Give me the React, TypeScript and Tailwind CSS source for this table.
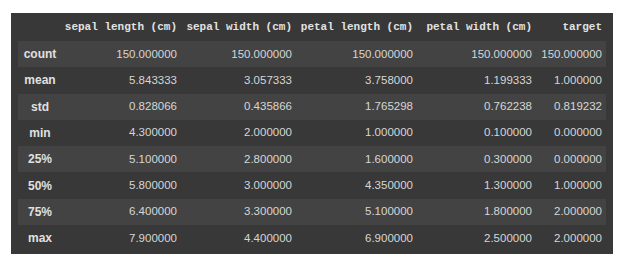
const columns = ["sepal length (cm)", "sepal width (cm)", "petal length (cm)", "petal width (cm)", "target"];

const rows: [string, string[]][] = [
  ["count", ["150.000000", "150.000000", "150.000000", "150.000000", "150.000000"]],
  ["mean", ["5.843333", "3.057333", "3.758000", "1.199333", "1.000000"]],
  ["std", ["0.828066", "0.435866", "1.765298", "0.762238", "0.819232"]],
  ["min", ["4.300000", "2.000000", "1.000000", "0.100000", "0.000000"]],
  ["25%", ["5.100000", "2.800000", "1.600000", "0.300000", "0.000000"]],
  ["50%", ["5.800000", "3.000000", "4.350000", "1.300000", "1.000000"]],
  ["75%", ["6.400000", "3.300000", "5.100000", "1.800000", "2.000000"]],
  ["max", ["7.900000", "4.400000", "6.900000", "2.500000", "2.000000"]],
];

const grid = "grid grid-cols-[44px_120px_115px_121px_119px_70px] items-center";

export default function App() {
  return (
    <div className="w-[626px] h-[262px] bg-white pt-[13px] pl-[11px]">
      <div className="w-[602px] bg-[#383838] px-[7px] pb-[3px] text-[#d6d6d6] font-['Liberation_Sans',Arial,sans-serif]">
        {/* Header */}
        <div className={`${grid} h-[28px]`}>
          <div />
          {columns.map((c) => (
            <div
              key={c}
              className="text-right pr-[5px] font-['Liberation_Mono','DejaVu_Sans_Mono',monospace] font-bold text-[11px] text-[#e2e2e2] whitespace-nowrap"
            >
              {c}
            </div>
          ))}
        </div>

        {/* Body */}
        {rows.map(([label, vals], i) => (
          <div key={label} className={`${grid} h-[26.3px] ${i % 2 === 0 ? "bg-[#434343]" : ""}`}>
            <div className="text-center font-bold text-[12px] text-[#e0e0e0]">{label}</div>
            {vals.map((v, j) => (
              <div key={j} className="text-right pr-[5px] text-[11.5px] whitespace-nowrap">
                {v}
              </div>
            ))}
          </div>
        ))}
      </div>
    </div>
  );
}
